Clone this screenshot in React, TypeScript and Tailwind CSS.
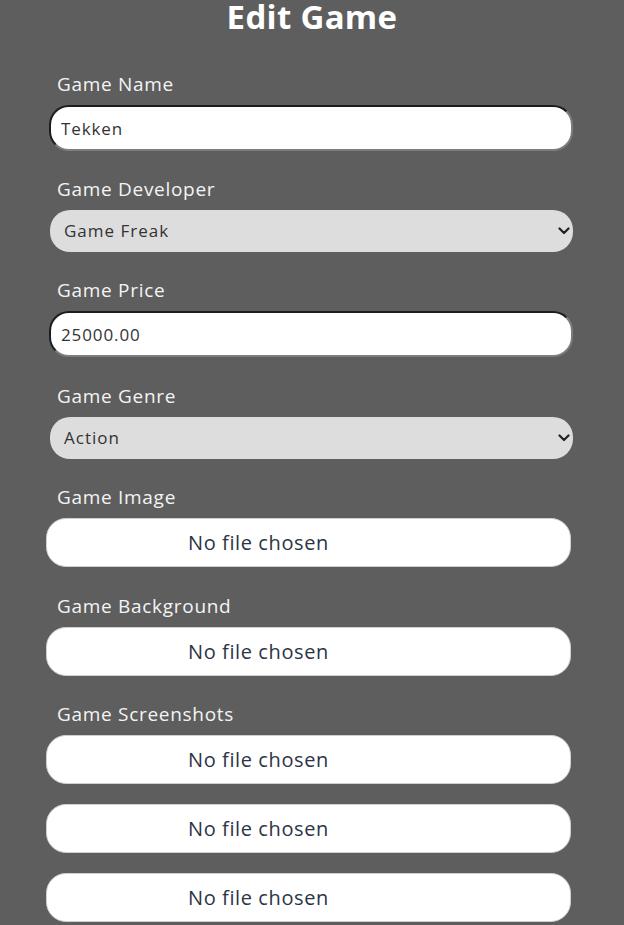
import React, { useState } from 'react';

const font = { fontFamily: '"Open Sans", "DejaVu Sans", sans-serif' };

const Label: React.FC<{ text: string }> = ({ text }) => (
    <label className="block pl-[8px] mb-[10px] text-[19px] leading-[22px] tracking-[0.7px] text-[#f4f4f4]">{text}</label>
);

const Chevron = () => (
    <svg className="pointer-events-none absolute right-[3px] top-1/2 -translate-y-1/2" width="12" height="8" viewBox="0 0 12 8" fill="none">
        <path d="M1.5 1.5 L6 6 L10.5 1.5" stroke="#222" strokeWidth="2.2" strokeLinecap="round" strokeLinejoin="round" />
    </svg>
);

const FileBox: React.FC = () => (
    <div className="h-[49px] w-[525px] ml-[-3px] rounded-[20px] bg-white border border-[#cfcfcf] flex items-center pl-[141px] text-[20px] tracking-[0.6px] text-[#2c3446]">
        No file chosen
    </div>
);

const App: React.FC = () => {
    const [name, setName] = useState('Tekken');
    const [price, setPrice] = useState('25000.00');
    const [developer, setDeveloper] = useState('Game Freak');
    const [genre, setGenre] = useState('Action');

    const textInput = "block w-[524px] h-[46px] rounded-[20px] bg-white border-2 border-t-[#1c1c1c] border-l-[#1c1c1c] border-r-[#7d7d7d] border-b-[#7d7d7d] pl-[10px] text-[17px] tracking-[0.9px] text-[#333] outline-none";
    const selectCls = "block w-[523px] h-[42px] rounded-[20px] bg-[#dddddd] appearance-none pl-[14px] text-[17px] tracking-[1px] text-[#333] outline-none";

    return (
        <div className="min-h-screen bg-[#5e5e5e] overflow-hidden" style={font}>
            <h1 className="text-center text-white font-bold text-[33px] leading-[34px] tracking-[0.3px]">Edit Game</h1>
            <form className="pl-[49px] mt-[39px]" onSubmit={e => e.preventDefault()}>
                <div>
                    <Label text="Game Name" />
                    <input className={textInput} value={name} onChange={e => setName(e.target.value)} />
                </div>
                <div className="mt-[27px]">
                    <Label text="Game Developer" />
                    <div className="relative w-[523px] ml-[1px] mt-[3px]">
                        <select className={selectCls + " h-[41px]"} value={developer} onChange={e => setDeveloper(e.target.value)}>
                            <option>Game Freak</option>
                            <option>Bandai Namco</option>
                            <option>Capcom</option>
                        </select>
                        <Chevron />
                    </div>
                </div>
                <div className="mt-[27px]">
                    <Label text="Game Price" />
                    <input className={textInput + " h-[45px] mt-[1px]"} value={price} onChange={e => setPrice(e.target.value)} />
                </div>
                <div className="mt-[28px]">
                    <Label text="Game Genre" />
                    <div className="relative w-[523px] ml-[1px] mt-[2px]">
                        <select className={selectCls} value={genre} onChange={e => setGenre(e.target.value)}>
                            <option>Action</option>
                            <option>Fighting</option>
                            <option>RPG</option>
                        </select>
                        <Chevron />
                    </div>
                </div>
                <div className="mt-[27px]">
                    <Label text="Game Image" />
                    <FileBox />
                </div>
                <div className="mt-[28px]">
                    <Label text="Game Background" />
                    <FileBox />
                </div>
                <div className="mt-[27px]">
                    <Label text="Game Screenshots" />
                    <div className="flex flex-col gap-[20px] mt-[1px]">
                        <FileBox />
                        <FileBox />
                        <FileBox />
                    </div>
                </div>
            </form>
        </div>
    );
};

export default App;
